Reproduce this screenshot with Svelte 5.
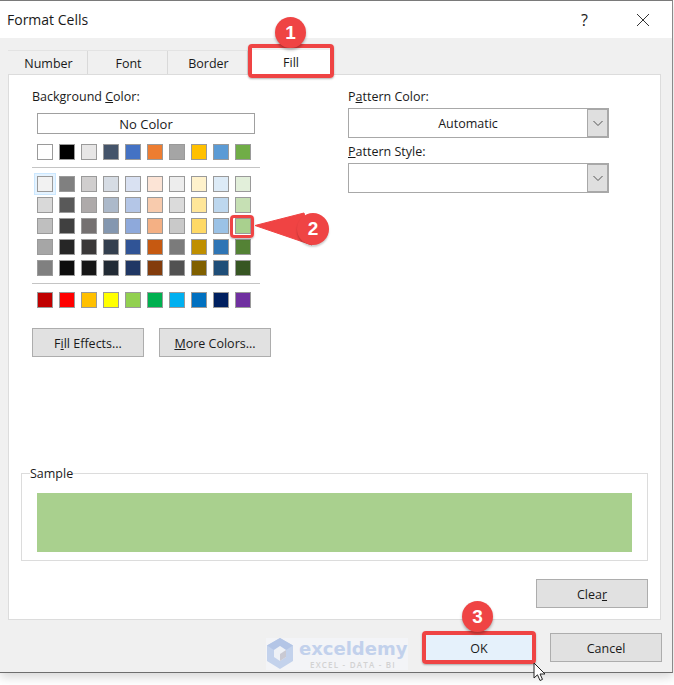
<script>
  const tabs = ['Number', 'Font', 'Border'];
  const theme = ['#ffffff','#000000','#e7e6e6','#44546a','#4472c4','#ed7d31','#a5a5a5','#ffc000','#5b9bd5','#70ad47'];
  const tints = [
    ['#f2f2f2','#808080','#d0cece','#d6dce4','#d9e1f2','#fce4d6','#ededed','#fff2cc','#ddebf7','#e2efda'],
    ['#d9d9d9','#595959','#aeaaaa','#acb9ca','#b4c6e7','#f8cbad','#dbdbdb','#ffe699','#bdd7ee','#c6e0b4'],
    ['#bfbfbf','#404040','#757171','#8497b0','#8ea9db','#f4b084','#c9c9c9','#ffd966','#9bc2e6','#a9d08e'],
    ['#a6a6a6','#262626','#3a3838','#333f4f','#305496','#c65911','#7b7b7b','#bf8f00','#2f75b5','#548235'],
    ['#808080','#0d0d0d','#161616','#222b35','#203764','#833c0c','#525252','#806000','#1f4e78','#375623']
  ];
  const standard = ['#c00000','#ff0000','#ffc000','#ffff00','#92d050','#00b050','#00b0f0','#0070c0','#002060','#7030a0'];
</script>

<div class="page">
<div class="window">
  <header class="title">
    <span class="title-text">Format Cells</span>
    <span class="help">?</span>
    <svg class="close" width="14" height="14" viewBox="0 0 14 14"><path d="M1 1 L13 13 M13 1 L1 13" stroke="#333" stroke-width="1" fill="none"/></svg>
  </header>

  <main class="body">
    <nav class="tabs">
      {#each tabs as t}<div class="tab">{t}</div>{/each}
      <div class="tab active">Fill</div>
    </nav>

    <section class="panel">
      <div class="columns">
        <div class="left">
          <div class="label">Background <u>C</u>olor:</div>
          <div class="nocolor">No Color</div>
          <div class="row first">
            {#each theme as c}<span class="sw" style="background:{c}"></span>{/each}
          </div>
          <div class="sep"></div>
          <div class="tint-rows">
            {#each tints as row, r}
              <div class="row">
                {#each row as c, i}<span class="sw" class:sel={r === 0 && i === 0} style="background:{c}"></span>{/each}
              </div>
            {/each}
          </div>
          <div class="sep"></div>
          <div class="row">
            {#each standard as c}<span class="sw" style="background:{c}"></span>{/each}
          </div>
          <div class="btns">
            <div class="btn">F<u>i</u>ll Effects...</div>
            <div class="btn"><u>M</u>ore Colors...</div>
          </div>
        </div>

        <div class="right">
          <div class="label">P<u>a</u>ttern Color:</div>
          <div class="combo">
            <span class="combo-val">Automatic</span>
            <span class="arrow"><svg width="12" height="7" viewBox="0 0 12 7"><path d="M1.5 1 L6 5.5 L10.5 1" stroke="#555" fill="none"/></svg></span>
          </div>
          <div class="label second"><u>P</u>attern Style:</div>
          <div class="combo">
            <span class="combo-val"></span>
            <span class="arrow"><svg width="12" height="7" viewBox="0 0 12 7"><path d="M1.5 1 L6 5.5 L10.5 1" stroke="#555" fill="none"/></svg></span>
          </div>
        </div>
      </div>

      <fieldset class="sample">
        <legend>Sample</legend>
        <div class="preview"></div>
      </fieldset>

      <div class="clear-row"><div class="btn">Clea<u>r</u></div></div>
    </section>

    <footer class="foot">
      <div class="btn ok">OK</div>
      <div class="btn">Cancel</div>
    </footer>
  </main>

  <div class="mark">
    <svg width="28" height="31" viewBox="0 0 28 31">
      <path d="M14 0 L27 7.5 L27 23 L14 31 L1 23 L1 7.5 Z" fill="#c3d2ec"/>
      <path d="M14 0 L27 7.5 L20 12 L14 8 L8 12 L1 7.5 Z" fill="#b3c5e6"/>
      <path d="M8 12 L14 8 L20 12 L20 19 L14 23 L8 19 Z" fill="#eef1f6"/>
      <path d="M14 16 L20 12 L20 19 L14 23 Z" fill="#c9c9d2"/>
    </svg>
    <div class="mark-text">
      <div class="mark-name">exceldemy</div>
      <div class="mark-sub">EXCEL - DATA - BI</div>
    </div>
  </div>

  <div class="hl hl-fill"></div>
  <div class="hl hl-swatch"></div>
  <div class="hl hl-ok"></div>

  <div class="badge b1">1</div>
  <svg class="tail" width="62" height="38" viewBox="0 0 62 38"><path d="M1 16.5 L50 4 L58 36 Z" fill="#f04343" stroke="#f04343" stroke-linejoin="round"/></svg>
  <div class="badge b2">2</div>
  <div class="badge b3">3</div>

  <svg class="cursor" width="14" height="20" viewBox="0 0 14 20">
    <path d="M1 1 L1 16 L4.5 12.8 L7 18.5 L9.5 17.4 L7 12 L12 12 Z" fill="#fff" stroke="#222" stroke-width="1" stroke-linejoin="round"/>
  </svg>
</div>
</div>

<style>
  :global(body) { margin: 0; background: #fff; }
  .page { height: 685px; overflow: hidden; }
  .window {
    position: relative;
    box-sizing: border-box;
    width: 673px;
    height: 673px;
    border-top: 1px solid #7a7a7a;
    border-right: 1px solid #8a8a8a;
    border-bottom: 1px solid #6e6e6e;
    box-shadow: 0 4px 10px rgba(0,0,0,.16);
    background: #f0f0f0;
    font-family: "Open Sans", "Noto Sans", sans-serif;
    font-size: 12.5px;
    color: #1a1a1a;
    display: flex;
    flex-direction: column;
  }
  u { text-underline-offset: 1px; }
  .title {
    height: 37px;
    background: #fff;
    display: flex;
    align-items: center;
    padding-left: 7px;
    flex: none;
  }
  .title-text { font-size: 14px; }
  .help { margin-left: auto; font-size: 16px; margin-right: 48px; }
  .close { margin-right: 22px; }
  .body { flex: 1; display: flex; flex-direction: column; padding: 12px 12px 0 8px; min-height: 0; }
  .tabs { display: flex; height: 24px; padding-left: 2px; border-top: 1px solid #e3e3e3; width: 240px; box-sizing: border-box; flex: none; }
  .tab {
    width: 78px; height: 24px; flex: none;
    box-sizing: border-box;
    border-right: 1px solid #d9d9d9;
    margin-right: 2px;
    display: flex; align-items: center; justify-content: center;
  }
  .tab.active { background: #fff; width: 82px; border: none; margin-top: -1px; height: 26px; position: relative; padding-bottom: 2px; }
  .panel {
    box-sizing: border-box;
    width: 653px;
    height: 546px;
    background: #fff;
    border: 1px solid #dcdcdc;
    padding: 13px 12px 0 12px;
    flex: none;
    display: flex;
    flex-direction: column;
  }
  .columns { display: flex; height: 372px; flex: none; }
  .left { width: 228px; padding-left: 11px; flex: none; }
  .label { height: 17px; line-height: 17px; }
  .nocolor {
    box-sizing: border-box;
    margin: 8px 0 0 5px;
    width: 218px; height: 21px;
    border: 1px solid #a0a0a0;
    font-size: 13px;
    text-align: center; line-height: 20px;
  }
  .row { display: flex; gap: 6px; padding-left: 5px; height: 16px; }
  .row.first { margin-top: 10px; }
  .sw { width: 16px; height: 16px; box-sizing: border-box; border: 1px solid #9a9a9a; flex: none; }
  .sw.sel { box-shadow: 0 0 0 2px #e5f3ff, 0 0 0 3px #cce8ff; }
  .sep { width: 228px; height: 1px; background: #c4c4c4; margin: 7px 0 8px 0; }
  .tint-rows { display: flex; flex-direction: column; gap: 5px; }
  .btns { display: flex; gap: 15px; margin-top: 20px; }
  .btn {
    box-sizing: border-box;
    width: 112px; height: 29px;
    padding-top: 1px;
    background: #e1e1e1;
    border: 1px solid #adadad;
    display: flex; align-items: center; justify-content: center;
    flex: none;
  }
  .right { margin-left: 88px; width: 261px; }
  .combo {
    box-sizing: border-box;
    width: 261px; height: 30px;
    margin-top: 3px;
    border: 1px solid #a8a8a8;
    display: flex;
  }
  .combo-val { width: 238px; display: flex; align-items: center; justify-content: center; }
  .arrow {
    flex: 1;
    background: #dfdfdf;
    border: 1px solid #a8a8a8;
    display: flex; align-items: center; justify-content: center;
  }
  .second { margin-top: 5px; }
  .sample {
    box-sizing: border-box;
    width: 627px; height: 97px;
    margin: 4px 0 0 0;
    padding: 10px 15px 0 15px;
    border: 1px solid #dcdcdc;
    min-width: 0;
    flex: none;
  }
  legend { padding: 0; margin-left: -7px; line-height: 19px; }
  .preview { width: 595px; height: 59px; background: #a9d08e; }
  .clear-row { display: flex; justify-content: flex-end; width: 627px; margin-top: 18px; }
  .foot { display: flex; justify-content: flex-end; gap: 15px; padding: 13px 0 0 0; width: 654px; }
  .ok { background: #e5f1fb; }

  .mark { position: absolute; left: 266px; top: 637px; width: 142px; display: flex; gap: 5px; background: #f3f4f7; }
  .mark-text { display: flex; flex-direction: column; }
  .mark-name { font-family: "DejaVu Sans", sans-serif; font-weight: 700; font-size: 18px; line-height: 22px; color: #c2d1ec; }
  .mark-sub { font-family: "Open Sans", sans-serif; font-weight: 600; font-size: 8px; letter-spacing: 1.2px; color: #d2d2d2; line-height: 10px; margin-left: 11px; white-space: nowrap; }

  .hl { position: absolute; box-sizing: border-box; border: 4px solid #ef4444; border-radius: 4px; box-shadow: 0 1px 2px rgba(0,0,0,.3); }
  .hl-fill { left: 248px; top: 43px; width: 86px; height: 34px; }
  .hl-swatch { left: 230px; top: 214px; width: 24px; height: 23px; border-width: 3px; }
  .hl-ok { left: 422px; top: 630px; width: 114px; height: 33px; }
  .badge {
    position: absolute; width: 31px; height: 31px; border-radius: 50%;
    background: #ef4444; color: #fff;
    font-family: "Liberation Sans", sans-serif; font-weight: 700; font-size: 19px;
    display: flex; align-items: center; justify-content: center;
    box-shadow: 0 2px 3px rgba(0,0,0,.3);
  }
  .b1 { left: 275px; top: 16px; }
  .b2 { left: 297px; top: 212px; width: 32px; height: 32px; box-shadow: 0 2px 2px rgba(0,0,0,.2); }
  .b3 { left: 462px; top: 600px; }
  .tail { position: absolute; left: 254px; top: 208px; }
  .cursor { position: absolute; left: 533px; top: 661px; }
</style>
